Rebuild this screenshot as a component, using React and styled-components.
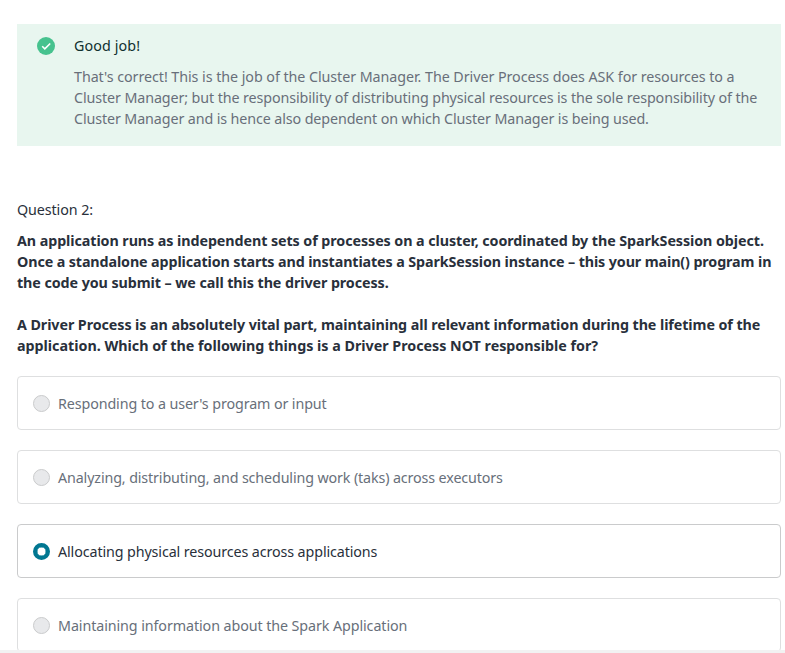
import React from 'react';
import styled, { createGlobalStyle } from 'styled-components';

const GlobalStyle = createGlobalStyle`
  * { box-sizing: border-box; }
  body { margin: 0; background: #fff; font-family: "Noto Sans", sans-serif; overflow: hidden; }
`;

const Page = styled.main`
  width: 785px;
  height: 653px;
  padding: 24px 4px 0 17px;
  overflow: hidden;
  border-bottom: 3px solid #f2f2f2;
  font-size: 14.3px;
  line-height: 21px;
  color: #29303b;
`;

const Feedback = styled.section`
  display: flex;
  gap: 19px;
  height: 122px;
  padding: 11px 20px;
  background: #e8f6ef;
`;

const CheckIcon = styled.svg`
  flex: none;
  width: 18px;
  height: 18px;
  margin-top: 2px;
`;

const FeedbackTitle = styled.div`
  margin-bottom: 10px;
  color: #10312f;
  letter-spacing: 0.1px;
`;

const Line = styled.span`
  display: block;
  min-height: 21px;
  white-space: nowrap;
  letter-spacing: ${({ $spacing }) => $spacing}px;
`;

const FeedbackText = styled.div`
  color: #686f7a;
`;

const QuestionLabel = styled.div`
  margin-top: 53px;
  letter-spacing: -0.09px;
`;

const Prompt = styled.div`
  margin-top: 10px;
  font-weight: 700;
`;

const Options = styled.div`
  display: flex;
  flex-direction: column;
  gap: 20px;
  margin-top: 20px;
`;

const Option = styled.div`
  display: flex;
  align-items: center;
  flex: none;
  gap: 8px;
  height: 54px;
  padding: 0 15px;
  border: 1px solid ${({ $selected }) => ($selected ? '#cacbcc' : '#dedfe0')};
  border-radius: 4px;
  color: ${({ $selected }) => ($selected ? '#29303b' : '#686f7a')};
`;

const Radio = styled.span`
  flex: none;
  width: 17px;
  height: 17px;
  border: ${({ $selected }) => ($selected ? '4px solid #007791' : '1px solid #cacbcc')};
  border-radius: 50%;
  background: ${({ $selected }) => ($selected ? '#fff' : '#e8e9eb')};
  box-shadow: ${({ $selected }) => ($selected ? 'inset 0 0 0 0.5px #007791' : 'none')};
`;

const feedback = [
  ["That's correct! This is the job of the Cluster Manager. The Driver Process does ASK for resources to a", -0.06],
  ['Cluster Manager; but the responsibility of distributing physical resources is the sole responsibility of the', -0.108],
  ['Cluster Manager and is hence also dependent on which Cluster Manager is being used.', -0.112],
];

const prompt = [
  ['An application runs as independent sets of processes on a cluster, coordinated by the SparkSession object.', -0.075],
  ['Once a standalone application starts and instantiates a SparkSession instance – this your main() program in', -0.11],
  ['the code you submit – we call this the driver process.', -0.08],
  ['', 0],
  ['A Driver Process is an absolutely vital part, maintaining all relevant information during the lifetime of the', -0.078],
  ['application. Which of the following things is a Driver Process NOT responsible for?', -0.01],
];

const answers = [
  ["Responding to a user's program or input", -0.11],
  ['Analyzing, distributing, and scheduling work (taks) across executors', -0.13],
  ['Allocating physical resources across applications', -0.11],
  ['Maintaining information about the Spark Application', -0.09],
];

const renderLines = (lines) =>
  lines.map(([text, spacing], i) => <Line key={i} $spacing={spacing}>{text}</Line>);

export default function App() {
  return (
    <>
      <GlobalStyle />
      <Page>
        <Feedback>
          <CheckIcon viewBox="0 0 18 18">
            <circle cx="9" cy="9" r="9" fill="#46c28e" />
            <path d="M5.2 9.3 7.8 11.9l5.4-5.4" fill="none" stroke="#fff" strokeWidth="1.6" />
          </CheckIcon>
          <div>
            <FeedbackTitle>Good job!</FeedbackTitle>
            <FeedbackText>{renderLines(feedback)}</FeedbackText>
          </div>
        </Feedback>
        <QuestionLabel>Question 2:</QuestionLabel>
        <Prompt>{renderLines(prompt)}</Prompt>
        <Options>
          {answers.map(([text, spacing], i) => (
            <Option key={text} $selected={i === 2}>
              <Radio $selected={i === 2} />
              <Line $spacing={spacing}>{text}</Line>
            </Option>
          ))}
        </Options>
      </Page>
    </>
  );
}
